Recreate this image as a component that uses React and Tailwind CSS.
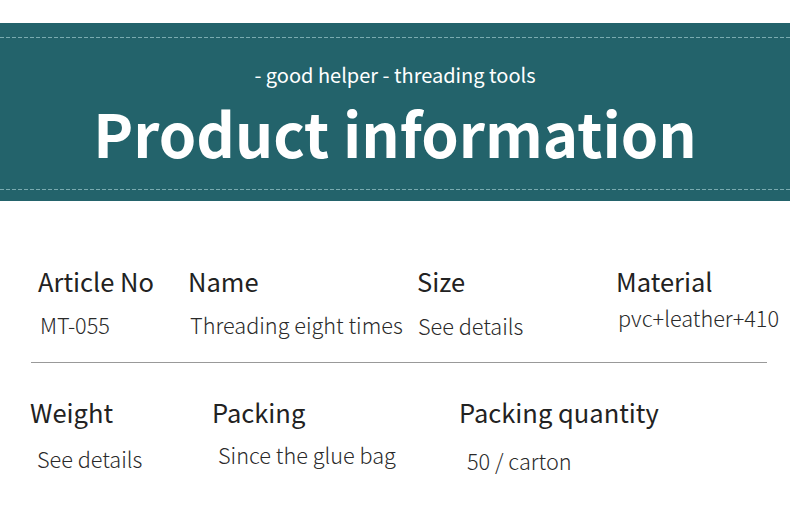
export default function App() {
  const font = { fontFamily: '"Noto Sans CJK SC", "Noto Sans", sans-serif' };
  const dash = "h-px bg-[repeating-linear-gradient(90deg,#7aabb0_0_4px,transparent_4px_6px)]";
  return (
    <div className="w-[790px] h-[509px] bg-white overflow-hidden text-[#222]" style={font}>
      <div className="h-[23px]" />
      <div className="h-[178px] bg-[#23636b] flex flex-col pt-[14px]">
        <div className={dash} />
        <div className="flex-1 flex flex-col items-center text-white">
          <div className="mt-[24px] text-[20px] leading-[26px]">- good helper - threading tools</div>
          <div className="mt-[14px] text-[60px] font-bold leading-[60px]">Product information</div>
        </div>
        <div className={dash + " mb-[11px]"} />
      </div>
      <div className="flex pt-[63px] h-[161px]">
        <div className="w-[188px] pl-[38px]">
          <div className="text-[25.5px] leading-[34px]">Article No</div>
          <div className="pl-[2px] mt-[14px] text-[21.7px] leading-[26px] font-light text-[#2a2a2a]">MT-055</div>
        </div>
        <div className="w-[229px]">
          <div className="text-[25.5px] leading-[34px]">Name</div>
          <div className="pl-[2px] mt-[14px] text-[21.7px] leading-[26px] font-light text-[#2a2a2a]">Threading eight times</div>
        </div>
        <div className="w-[199px]">
          <div className="text-[25.5px] leading-[34px]">Size</div>
          <div className="pl-[1px] mt-[15px] text-[21.7px] leading-[26px] font-light text-[#2a2a2a]">See details</div>
        </div>
        <div>
          <div className="text-[25.5px] leading-[34px]">Material</div>
          <div className="pl-[2px] mt-[7px] text-[21.7px] leading-[26px] font-light text-[#2a2a2a]">pvc+leather+410</div>
        </div>
      </div>
      <div className="mx-[31px] w-[736px] border-t border-[#999]" />
      <div className="flex pt-[32px]">
        <div className="w-[212px] pl-[30px]">
          <div className="text-[25.5px] leading-[34px]">Weight</div>
          <div className="pl-[7px] mt-[17px] text-[21.7px] leading-[26px] font-light text-[#2a2a2a]">See details</div>
        </div>
        <div className="w-[247px]">
          <div className="text-[25.5px] leading-[34px]">Packing</div>
          <div className="pl-[6px] mt-[13px] text-[21.7px] leading-[26px] font-light text-[#2a2a2a]">Since the glue bag</div>
        </div>
        <div>
          <div className="text-[25.5px] leading-[34px]">Packing quantity</div>
          <div className="pl-[8px] mt-[19px] text-[21.7px] leading-[26px] font-light text-[#2a2a2a]">50 / carton</div>
        </div>
      </div>
    </div>
  );
}
